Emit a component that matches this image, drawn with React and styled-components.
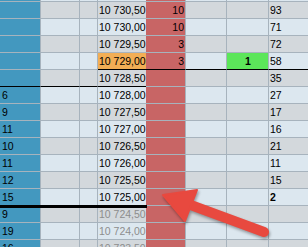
import React from "react";
import styled, { createGlobalStyle, css } from "styled-components";

const GlobalStyle = createGlobalStyle`
  html, body {
    margin: 0;
    padding: 0;
    overflow: hidden;
    background: #dce7ef;
  }
  body {
    font-family: "Liberation Sans", Arial, sans-serif;
  }
`;

const Page = styled.div`
  position: relative;
  width: 308px;
  height: 247px;
  overflow: hidden;
`;

const Grid = styled.div`
  display: grid;
  grid-template-columns: 41px 39px 18px 48px 40px 41px 42px 1fr;
  margin-top: -15px;
`;

const bgFor = ({ $kind, $odd }) => {
  if ($kind === "bid") return "#4398bf";
  if ($kind === "ask") return "#c86565";
  if ($kind === "last") return "#f2ae55";
  if ($kind === "trade") return "#5ce65a";
  return $odd ? "#dce7ef" : "#d3d8dc";
};

const Cell = styled.div`
  position: relative;
  box-sizing: border-box;
  height: 17px;
  line-height: 16px;
  font-size: 10.5px;
  color: ${(p) => (p.$dim ? "#8d8d8d" : "#000")};
  font-weight: ${(p) => (p.$bold ? 700 : 400)};
  background: ${bgFor};
  border-bottom: 1px solid ${(p) => (p.$line ? "#000" : "#a7b3bd")};
  border-right: ${(p) => (p.$noRight ? "none" : "1px solid #a7b3bd")};
  padding: 0 ${(p) => (p.$align === "right" ? "1px" : "0")} 0
    ${(p) => p.$pad ?? 1}px;
  text-align: ${(p) => p.$align || "left"};
  white-space: nowrap;

  ${(p) =>
    p.$thick &&
    css`
      &::after {
        content: "";
        position: absolute;
        left: 0;
        right: -1px;
        top: 100%;
        height: 3px;
        background: #000;
        z-index: 2;
      }
    `}
`;

const Clip = styled.span`
  display: block;
  overflow: hidden;
`;

const Arrow = styled.svg`
  position: absolute;
  left: 0;
  top: 0;
  width: 308px;
  height: 247px;
  pointer-events: none;
  z-index: 5;
  filter: drop-shadow(1px 2px 1.5px rgba(0, 0, 0, 0.35));
`;

const bids = ["", "", "", "", "", "6", "9", "11", "10", "11", "12", "15", "9", "19", "16"];
const asks = ["10", "10", "3", "3"];
const totals = ["93", "71", "72", "58", "35", "27", "17", "16", "21", "11", "15", "2"];

const fmt = (v) => {
  const [i, d] = v.toFixed(2).split(".");
  return `${i.slice(0, 2)} ${i.slice(2)},${d}`;
};

// row -1 sits above the visible area; only its bottom edge shows
const rows = Array.from({ length: 16 }, (_, k) => k - 1).map((i) => ({
  i,
  odd: i % 2 !== 0,
  price: i >= 0 ? fmt(10730.5 - i * 0.5) : "",
  bid: i >= 0 ? bids[i] || "" : "",
  ask: i >= 0 ? asks[i] || "" : "",
  trade: i === 3 ? "1" : "",
  total: i >= 0 ? totals[i] || "" : "",
}));

export default function App() {
  return (
    <Page>
      <GlobalStyle />
      <Grid>
        {rows.map((r) => {
          const rightLine = r.i === 3;
          const leftLine = r.i === 4;
          const thick = r.i === 11;
          return (
            <React.Fragment key={r.i}>
              <Cell $kind="bid" $pad={2} $line={leftLine} $thick={thick}>
                {r.bid}
              </Cell>
              <Cell $odd={r.odd} $line={leftLine} $thick={thick} />
              <Cell $odd={r.odd} $line={leftLine} $thick={thick} />
              <Cell
                $odd={r.odd}
                $kind={r.i === 3 ? "last" : undefined}
                $noRight
                $line={leftLine || rightLine}
                $thick={thick}
                $dim={r.i >= 12}
              >
                <Clip>{r.price}</Clip>
              </Cell>
              <Cell $kind="ask" $align="right" $line={rightLine}>
                {r.ask}
              </Cell>
              <Cell $odd={r.odd} $line={rightLine} />
              <Cell
                $odd={r.odd}
                $kind={r.trade ? "trade" : undefined}
                $align="center"
                $bold
                $line={rightLine}
              >
                {r.trade}
              </Cell>
              <Cell $odd={r.odd} $noRight $line={rightLine} $bold={r.i === 11}>
                {r.total}
              </Cell>
            </React.Fragment>
          );
        })}
      </Grid>
      <Arrow viewBox="0 0 308 247">
        <line x1="264" y1="232" x2="188" y2="204" stroke="#e8493f" strokeWidth="10" strokeLinecap="round" />
        <polygon points="163,195 197,190 185,221" fill="#e8493f" strokeLinejoin="round" stroke="#e8493f" strokeWidth="2" />
      </Arrow>
    </Page>
  );
}
